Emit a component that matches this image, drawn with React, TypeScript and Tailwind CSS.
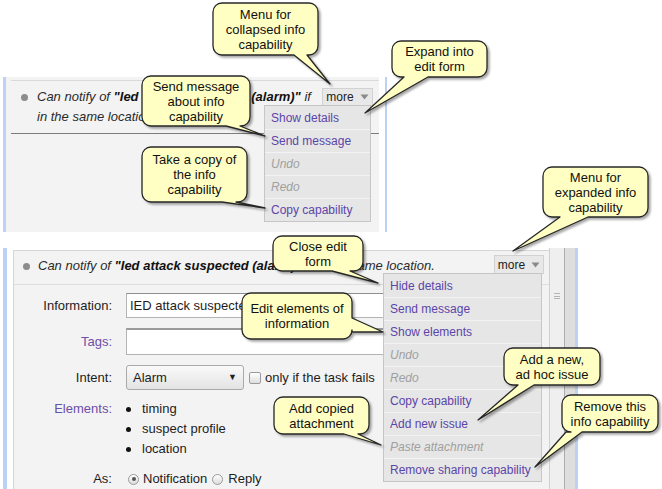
import React from 'react';

// --- TYPES ---
type Tail = { side: 'bottom' | 'right'; a: number; b: number; tip: [number, number] };
type Note = { x: number; y: number; w: number; h: number; lines: string[]; tail: Tail };
type Item = { label: string; off?: boolean };

// --- DATA ---
const NOTES: Note[] = [
  { x: 213, y: 3, w: 105, h: 52, lines: ['Menu for', 'collapsed info', 'capability'], tail: { side: 'bottom', a: 294, b: 307, tip: [330, 84] } },
  { x: 392, y: 41, w: 95, h: 36, lines: ['Expand into', 'edit form'], tail: { side: 'bottom', a: 404, b: 428, tip: [365, 113] } },
  { x: 142, y: 76, w: 108, h: 50, lines: ['Send message', 'about info', 'capability'], tail: { side: 'bottom', a: 226, b: 240, tip: [265, 136] } },
  { x: 142, y: 147, w: 105, h: 55, lines: ['Take a copy of', 'the info', 'capability'], tail: { side: 'bottom', a: 222, b: 236, tip: [265, 208] } },
  { x: 543, y: 167, w: 105, h: 50, lines: ['Menu for', 'expanded info', 'capability'], tail: { side: 'bottom', a: 560, b: 588, tip: [513, 251] } },
  { x: 273, y: 236, w: 90, h: 35, lines: ['Close edit', 'form'], tail: { side: 'bottom', a: 332, b: 350, tip: [378, 283] } },
  { x: 242, y: 293, w: 110, h: 46, lines: ['Edit elements of', 'information'], tail: { side: 'right', a: 318, b: 332, tip: [383, 332] } },
  { x: 504, y: 348, w: 96, h: 37, lines: ['Add a new,', 'ad hoc issue'], tail: { side: 'bottom', a: 518, b: 534, tip: [478, 420] } },
  { x: 274, y: 397, w: 95, h: 37, lines: ['Add copied', 'attachment'], tail: { side: 'bottom', a: 344, b: 358, tip: [381, 445] } },
  { x: 562, y: 395, w: 96, h: 37, lines: ['Remove this', 'info capability'], tail: { side: 'bottom', a: 566, b: 582, tip: [535, 467] } },
];

const SMALL_MENU: Item[] = [
  { label: 'Show details' },
  { label: 'Send message' },
  { label: 'Undo', off: true },
  { label: 'Redo', off: true },
  { label: 'Copy capability' },
];

const BIG_MENU: Item[] = [
  { label: 'Hide details' },
  { label: 'Send message' },
  { label: 'Show elements' },
  { label: 'Undo', off: true },
  { label: 'Redo', off: true },
  { label: 'Copy capability' },
  { label: 'Add new issue' },
  { label: 'Paste attachment', off: true },
  { label: 'Remove sharing capability' },
];

// rounded box + pointer, one outline
function calloutPath(n: Note, r = 9) {
  const { x, y, w, h, tail } = n;
  const R = x + w;
  const B = y + h;
  let d = `M${x + r},${y} H${R - r} A${r},${r} 0 0 1 ${R},${y + r}`;
  if (tail.side === 'right') d += ` V${tail.a} L${tail.tip[0]},${tail.tip[1]} L${R},${tail.b}`;
  d += ` V${B - r} A${r},${r} 0 0 1 ${R - r},${B}`;
  if (tail.side === 'bottom') d += ` H${tail.b} L${tail.tip[0]},${tail.tip[1]} L${tail.a},${B}`;
  d += ` H${x + r} A${r},${r} 0 0 1 ${x},${B - r} V${y + r} A${r},${r} 0 0 1 ${x + r},${y} Z`;
  return d;
}

function MoreButton({ className }: { className: string }) {
  return (
    <div className={`flex shrink-0 items-center justify-center gap-[6px] border border-[#d2d2d2] bg-[#e8e8e8] text-[12px] text-[#222] ${className}`}>
      <span>more</span>
      <svg width="9" height="6" viewBox="0 0 9 6">
        <path d="M0.5 0.5 H8.5 L4.5 5.5 Z" fill="#8a8a8a" />
      </svg>
    </div>
  );
}

function Menu({ items, className }: { items: Item[]; className: string }) {
  return (
    <div className={`absolute border border-[#c6c6c6] bg-[#e6e6e6] ${className}`}>
      {items.map((it, i) => (
        <div
          key={i}
          className={
            it.off
              ? 'flex h-[23px] items-center border-t border-[#f3f3f3] pl-[6px] text-[12px] italic text-[#a0a0a0] first:border-t-0'
              : 'flex h-[23px] items-center border-t border-[#f3f3f3] pl-[6px] text-[12px] text-[#5b45a8] first:border-t-0'
          }
        >
          {it.label}
        </div>
      ))}
    </div>
  );
}

function Radio({ on }: { on?: boolean }) {
  return (
    <span className="flex h-[11px] w-[11px] items-center justify-center rounded-full border border-[#9a9a9a] bg-linear-to-b from-[#ffffff] to-[#dcdcdc]">
      {on && <span className="h-[4px] w-[4px] rounded-full bg-[#555]" />}
    </span>
  );
}

export default function App() {
  return (
    <div className="relative h-[489px] w-[662px] overflow-hidden bg-white font-['Liberation_Sans',Arial,sans-serif] text-[#1d1d1d]">
      {/* --- collapsed info capability --- */}
      <div className="ml-[3px] mt-[77px] flex h-[155px] w-[384px]">
        <div className="w-[3px] bg-[#bcd2f4]" />
        <div className="flex-1 bg-[#f3f3f3] pl-[5px] pt-[3px]">
          <div className="border-t border-[#dadada]">
            <div className="flex items-start border-b border-[#7c7c7c] pb-[6px] pt-[6px]">
              <span className="ml-[10px] mt-[7px] h-[7px] w-[7px] shrink-0 rounded-full bg-[#8c8c8c]" />
              <p className="ml-[9px] w-[282px] text-[13px] italic leading-[20px] text-[#2a2a2a]">
                Can notify of <b className="text-[#111]">"Ied attack suspected (alarm)"</b> if in the same location.
              </p>
              <MoreButton className="ml-[3px] mt-px h-[18px] w-[51px]" />
            </div>
          </div>
        </div>
        <div className="w-[6px] bg-white" />
        <div className="w-[2px] bg-[#bcd2f4]" />
      </div>

      {/* --- expanded info capability --- */}
      <div className="ml-[3px] mt-[16px] flex h-[241px] w-[575px]">
        <div className="w-[4px] bg-[#bcd2f4]" />
        <div className="w-[6px] bg-white" />
        <div className="mt-[2px] flex-1 border-l border-t border-[#d6d6d6] bg-[#f3f3f3]">
          <div className="flex items-start border-b border-[#dddddd] pb-[8px] pr-[5px] pt-[5px]">
            <span className="ml-[9px] mt-[7px] h-[7px] w-[7px] shrink-0 rounded-full bg-[#8c8c8c]" />
            <p className="ml-[8px] flex-1 whitespace-nowrap text-[13px] italic leading-[20px] text-[#2a2a2a]">
              Can notify of <b className="text-[#111]">"Ied attack suspected (alarm)"</b> if in the same location.
            </p>
            <MoreButton className="-mt-px h-[19px] w-[50px]" />
          </div>

          <div className="pt-[8px] text-[13px]">
            <div className="flex h-[25px] items-center gap-[14px]">
              <span className="w-[98px] text-right">Information:</span>
              <div className="flex h-[25px] w-[410px] items-center border border-[#b4b4b4] border-t-[#8f8f8f] bg-white pl-[3px]">
                IED attack suspected
              </div>
            </div>
            <div className="mt-[10px] flex h-[27px] items-center gap-[14px]">
              <span className="w-[98px] text-right text-[#6b4fa8]">Tags:</span>
              <div className="h-[27px] w-[410px] border border-[#b4b4b4] border-t-2 border-t-[#9a9a9a] bg-white" />
            </div>
            <div className="mt-[10px] flex h-[25px] items-center gap-[14px]">
              <span className="w-[98px] text-right">Intent:</span>
              <div className="flex items-center">
                <div className="flex h-[25px] w-[118px] items-center justify-between rounded-[3px] border border-[#a9a9a9] bg-linear-to-b from-[#fafafa] to-[#e3e3e3] pl-[6px] pr-[6px]">
                  <span>Alarm</span>
                  <span className="text-[9px] text-[#222]">▼</span>
                </div>
                <span className="ml-[5px] h-[12px] w-[12px] rounded-[2px] border border-[#9a9a9a] bg-linear-to-b from-[#ffffff] to-[#dedede]" />
                <span className="ml-[4px]">only if the task fails</span>
              </div>
            </div>
            <div className="mt-[9px] flex items-start gap-[14px] leading-[20px]">
              <span className="w-[98px] text-right text-[#6b4fa8]">Elements:</span>
              <ul>
                {['timing', 'suspect profile', 'location'].map((el) => (
                  <li key={el} className="flex items-center">
                    <span className="h-[5px] w-[5px] rounded-full bg-[#111]" />
                    <span className="ml-[11px]">{el}</span>
                  </li>
                ))}
              </ul>
            </div>
            <div className="mt-[10px] flex items-center gap-[14px] leading-[20px]">
              <span className="w-[98px] text-right">As:</span>
              <div className="flex items-center">
                <span className="ml-[2px]"><Radio on /></span>
                <span className="ml-[4px]">Notification</span>
                <span className="ml-[5px]"><Radio /></span>
                <span className="ml-[5px]">Reply</span>
              </div>
            </div>
          </div>
        </div>
        <div className="flex w-[15px] justify-center border-l border-[#d0d0d0] bg-[#efefef] pt-[45px]">
          <div className="flex h-[6px] w-[6px] flex-col justify-between">
            <span className="h-px bg-[#b5b5b5]" />
            <span className="h-px bg-[#b5b5b5]" />
            <span className="h-px bg-[#b5b5b5]" />
          </div>
        </div>
        <div className="w-[11px] border-l border-[#adadad] bg-[#dedede]" />
        <div className="w-[3px] bg-[#bcd2f4]" />
      </div>

      {/* --- dropdown menus --- */}
      <Menu items={SMALL_MENU} className="left-[264px] top-[105px] w-[107px]" />
      <Menu items={BIG_MENU} className="left-[383px] top-[273px] w-[159px]" />

      {/* --- callouts --- */}
      <svg className="pointer-events-none absolute left-0 top-0" width="662" height="489">
        <defs>
          <filter id="sh" x="-20%" y="-20%" width="140%" height="140%">
            <feDropShadow dx="2" dy="2" stdDeviation="1.2" floodColor="#000" floodOpacity="0.35" />
          </filter>
        </defs>
        {NOTES.map((n, i) => (
          <path key={i} d={calloutPath(n)} fill="#ffffc4" stroke="#262626" strokeWidth="1.3" strokeLinejoin="round" filter="url(#sh)" />
        ))}
      </svg>
      {NOTES.map((n, i) => (
        <div
          key={i}
          className="absolute flex flex-col items-center justify-center text-center text-[13px] leading-[15px] text-[#111]"
          style={{ left: n.x, top: n.y, width: n.w, height: n.h }}
        >
          {n.lines.map((l) => (
            <span key={l} className="whitespace-nowrap">{l}</span>
          ))}
        </div>
      ))}
    </div>
  );
}
